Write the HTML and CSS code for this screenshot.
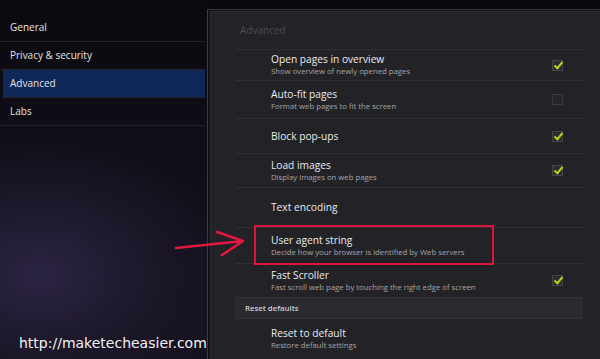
FILE: index.html
```html
<!DOCTYPE html>
<html>
<head>
<meta charset="utf-8">
<link rel="stylesheet" href="styles.css">
</head>
<body>
<div class="screen">
  <nav class="sidebar">
    <div class="nav-item">General</div>
    <div class="nav-item">Privacy &amp; security</div>
    <div class="nav-item active">Advanced</div>
    <div class="nav-item">Labs</div>
  </nav>
  <main class="panel">
    <div class="panel-title">Advanced</div>
    <div class="list">
      <div class="row h31">
        <div class="text"><div class="title">Open pages in overview</div><div class="sub">Show overview of newly opened pages</div></div>
        <span class="check on"></span>
      </div>
      <div class="row h38">
        <div class="text"><div class="title">Auto-fit pages</div><div class="sub">Format web pages to fit the screen</div></div>
        <span class="check off"></span>
      </div>
      <div class="row h35">
        <div class="text"><div class="title">Block pop-ups</div></div>
        <span class="check on"></span>
      </div>
      <div class="row h34">
        <div class="text"><div class="title">Load images</div><div class="sub">Display images on web pages</div></div>
        <span class="check on"></span>
      </div>
      <div class="row h40">
        <div class="text"><div class="title">Text encoding</div></div>
      </div>
      <div class="row h36">
        <div class="text"><div class="title">User agent string</div><div class="sub">Decide how your browser is identified by Web servers</div></div>
      </div>
      <div class="row h34">
        <div class="text"><div class="title">Fast Scroller</div><div class="sub">Fast scroll web page by touching the right edge of screen</div></div>
        <span class="check on"></span>
      </div>
      <div class="group">Reset defaults</div>
      <div class="row h41">
        <div class="text"><div class="title">Reset to default</div><div class="sub">Restore default settings</div></div>
      </div>
    </div>
  </main>
</div>
<svg class="annotation" width="600" height="359" viewBox="0 0 600 359">
  <rect x="255" y="226" width="238" height="38" fill="none" stroke="#d8163f" stroke-width="2"/>
  <path d="M176 248 L243 241 M217 232 L243 241 L222 255" fill="none" stroke="#e3173f" stroke-width="2.6" stroke-linecap="round" stroke-linejoin="round"/>
</svg>
<div class="watermark">http://maketecheasier.com</div>
</body>
</html>
```
FILE: styles.css
```css
html, body {
  margin: 0;
  padding: 0;
}
body {
  width: 600px;
  height: 359px;
  overflow: hidden;
  position: relative;
  background: #0a090e;
  font-family: "Open Sans", "DejaVu Sans", sans-serif;
}
.screen {
  display: flex;
  height: 359px;
}
.sidebar {
  width: 207px;
  flex: none;
  padding-top: 14px;
  box-sizing: border-box;
  background:
    radial-gradient(ellipse 200px 140px at 40px 275px, #2c2444 0%, #1c1729 55%, rgba(14,12,20,0) 100%),
    linear-gradient(#0b0a0f 0%, #100d17 40%, #16121f 100%);
}
.nav-item {
  height: 27px;
  line-height: 27px;
  padding-left: 10px;
  margin-right: 2px;
  border-bottom: 1px solid #25212c;
  font-size: 10px;
  color: #e4e4e6;
}
.nav-item.active {
  background: #0f2857;
  margin-left: 3px;
  padding-left: 7px;
}
.panel {
  flex: 1;
  margin-top: 9px;
  background: #222227;
  border-left: 1px solid #3b3b42;
  border-top: 1px solid #33333a;
  box-shadow: inset 2px 1px 0 #141418, inset 3px 2px 0 #2c2c33;
}
.panel-title {
  height: 39px;
  line-height: 40px;
  padding-left: 32px;
  font-size: 10px;
  color: #4c4c54;
}
.list {
  margin-left: 27px;
  width: 348px;
}
.row {
  display: flex;
  align-items: center;
  border-top: 1px solid #303037;
  box-sizing: border-box;
  padding-left: 36px;
  padding-right: 20px;
}
.h31 { height: 31px; }
.h34 { height: 34px; }
.h35 { height: 35px; }
.h36 { height: 36px; }
.h38 { height: 38px; }
.h40 { height: 40px; }
.h41 { height: 41px; }
.text {
  flex: 1;
}
.title {
  font-size: 10.2px;
  line-height: 13px;
  color: #ebebed;
}
.sub {
  font-size: 7.75px;
  line-height: 11px;
  color: #a5a5aa;
}
.check {
  width: 11px;
  height: 11px;
  flex: none;
  box-sizing: border-box;
  border: 1px solid #45454c;
  background: #2c2c31;
  position: relative;
}
.check.on::after {
  content: "";
  position: absolute;
  left: 3px;
  top: -1px;
  width: 3px;
  height: 7px;
  border-right: 2.5px solid #b6d31d;
  border-bottom: 2.5px solid #b6d31d;
  transform: rotate(40deg);
}
.check.off {
  border-color: #3a3a41;
  background: #26262b;
}
.group {
  height: 21px;
  line-height: 21px;
  padding-left: 10px;
  background: #2a2a30;
  border-top: 1px solid #303037;
  box-sizing: border-box;
  font-size: 7.8px;
  font-weight: 600;
  color: #cfcfd3;
}
.annotation {
  position: absolute;
  left: 0;
  top: 0;
}
.watermark {
  position: absolute;
  left: 19px;
  top: 335px;
  font-family: "DejaVu Sans", sans-serif;
  font-size: 14px;
  color: #f2f2f2;
}
```
